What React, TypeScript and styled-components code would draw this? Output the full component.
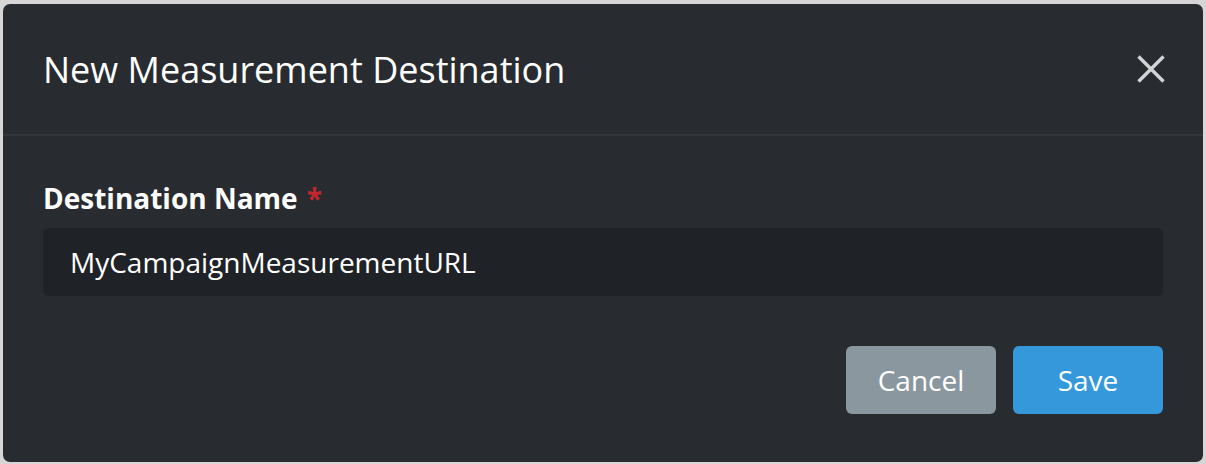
import React from "react";
import styled, { createGlobalStyle } from "styled-components";

const Global = createGlobalStyle`
  html, body { margin: 0; padding: 0; }
  body {
    background: #d6d6d6;
    font-family: "Open Sans", "Noto Sans", sans-serif;
    -webkit-font-smoothing: antialiased;
  }
`;

const Page = styled.div`
  width: 1206px;
  height: 464px;
  padding: 4px 3px 2px 3px;
  box-sizing: border-box;
  display: flex;
`;

const Modal = styled.div`
  flex: 1;
  background: #282c31;
  border-radius: 7px;
  display: flex;
  flex-direction: column;
  overflow: hidden;
`;

const Header = styled.div`
  height: 130px;
  padding: 0 32px 0 40px;
  display: flex;
  align-items: center;
  justify-content: space-between;
  border-bottom: 2px solid #31363b;
`;

const Title = styled.h2`
  margin: 0;
  font-size: 36px;
  font-weight: 400;
  color: #ffffff;
`;

const CloseButton = styled.button`
  width: 40px;
  height: 40px;
  padding: 0;
  border: none;
  background: transparent;
  display: flex;
  align-items: center;
  justify-content: center;
  cursor: pointer;
`;

const Body = styled.div`
  padding: 43px 40px 47px 40px;
  display: flex;
  flex-direction: column;
`;

const Label = styled.label`
  font-size: 28px;
  font-weight: 700;
  line-height: 39px;
  color: #ffffff;
`;

const Required = styled.span`
  color: #c1272d;
  margin-left: 9px;
`;

const Input = styled.div`
  margin-top: 10px;
  height: 68px;
  background: #1f2226;
  border-radius: 6px;
  padding: 0 27px;
  display: flex;
  align-items: center;
  font-size: 28px;
  color: #ffffff;
`;

const Actions = styled.div`
  margin-top: 50px;
  display: flex;
  justify-content: flex-end;
  gap: 17px;
`;

const Button = styled.button<{ $variant: "secondary" | "primary" }>`
  width: 150px;
  height: 68px;
  border: none;
  border-radius: 6px;
  font-family: "Open Sans", "Noto Sans", sans-serif;
  font-size: 28px;
  color: #ffffff;
  background: ${(p) => (p.$variant === "primary" ? "#3498db" : "#8a979f")};
  cursor: pointer;
`;

export default function App() {
  return (
    <>
      <Global />
      <Page>
        <Modal>
          <Header>
            <Title>New Measurement Destination</Title>
            <CloseButton aria-label="Close">
              <svg width="28" height="28" viewBox="0 0 28 28">
                <path
                  d="M1.5 1.5 L26.5 26.5 M26.5 1.5 L1.5 26.5"
                  stroke="#d2d4d6"
                  strokeWidth="3.4"
                  fill="none"
                />
              </svg>
            </CloseButton>
          </Header>
          <Body>
            <Label>
              Destination Name<Required>*</Required>
            </Label>
            <Input>MyCampaignMeasurementURL</Input>
            <Actions>
              <Button $variant="secondary">Cancel</Button>
              <Button $variant="primary">Save</Button>
            </Actions>
          </Body>
        </Modal>
      </Page>
    </>
  );
}
